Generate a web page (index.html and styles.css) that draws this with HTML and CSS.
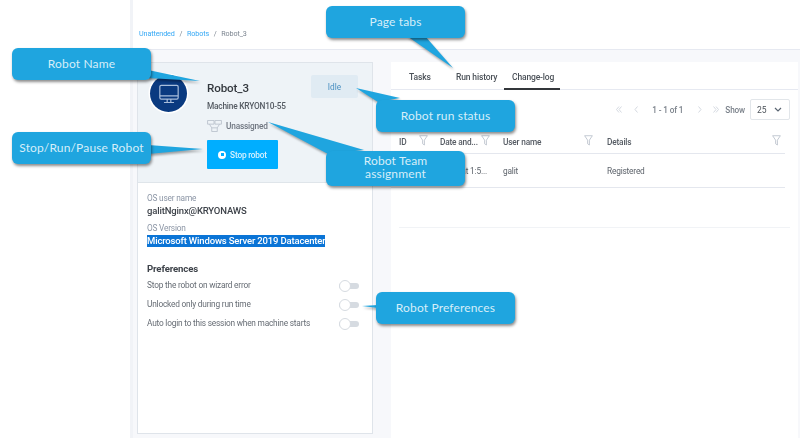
FILE: index.html
```html
<!DOCTYPE html>
<html lang="en">
<head>
<meta charset="utf-8">
<title>Robot_3</title>
<link rel="stylesheet" href="styles.css">
</head>
<body>
<div class="page">
  <div class="gutter"></div>
  <div class="app">
    <header class="crumbs">
      <a>Unattended</a><span class="sep">/</span><a>Robots</a><span class="sep">/</span><span>Robot_3</span>
    </header>
    <main class="main">
      <section class="card">
        <div class="head">
          <div class="avatar">
            <svg width="22" height="22" viewBox="0 0 24 24" fill="none" stroke="#a9bedb" stroke-width="1.3"><rect x="2" y="2.5" width="20" height="15" rx="1.5"/><path d="M2 14h20M10 17.5v3.5M14 17.5v3.5M6.5 21.3h11"/></svg>
          </div>
          <div class="head-body">
            <div class="title-row">
              <div class="name">Robot_3</div>
              <div class="status">Idle</div>
            </div>
            <div class="machine">Machine KRYON10-55</div>
            <div class="team">
              <svg width="15" height="12" viewBox="0 0 16 13" fill="none" stroke="#bcc3ce" stroke-width="1"><path d="M.5.5h7v4h-7zM8.5.5h7v4h-7zM5 8.5h6v4H5zM2.5 4.5 5 8.5M13.5 4.5 11 8.5"/></svg>
              <span>Unassigned</span>
            </div>
            <button class="stop"><span class="stop-ic"><i></i></span>Stop robot</button>
          </div>
        </div>
        <div class="info">
          <div class="lbl">OS user name</div>
          <div class="val">galitNginx@KRYONAWS</div>
          <div class="lbl lbl2">OS Version</div>
          <div class="val"><span class="sel">Microsoft Windows Server 2019 Datacenter</span></div>
          <h3 class="pref-title">Preferences</h3>
          <div class="pref"><span>Stop the robot on wizard error</span><span class="toggle"><i></i></span></div>
          <div class="pref"><span>Unlocked only during run time</span><span class="toggle"><i></i></span></div>
          <div class="pref"><span>Auto login to this session when machine starts</span><span class="toggle"><i></i></span></div>
        </div>
      </section>
      <section class="panel">
        <nav class="tabs">
          <span class="tab">Tasks</span>
          <span class="tab">Run history</span>
          <span class="tab active">Change-log</span>
        </nav>
        <div class="pager">
          <svg class="pg pg-first" width="6" height="7" viewBox="0 0 6 7"><path d="M3 .5 .5 3.5 3 6.5M5.5 .5 3 3.5 5.5 6.5"/></svg>
          <svg class="pg pg-prev" width="4" height="7" viewBox="0 0 4 7"><path d="M3.5 .5 1 3.5 3.5 6.5"/></svg>
          <span class="pg-count">1 - 1 of 1</span>
          <svg class="pg pg-next" width="4" height="7" viewBox="0 0 4 7"><path d="M.5 .5 3 3.5 .5 6.5"/></svg>
          <svg class="pg pg-last" width="6" height="7" viewBox="0 0 6 7"><path d="M.5 .5 3 3.5 .5 6.5M3 .5 5.5 3.5 3 6.5"/></svg>
          <span class="show">Show</span>
          <span class="select">25<svg width="8" height="5" viewBox="0 0 8 5" fill="none" stroke="#5a6572" stroke-width="1.2"><path d="M1 1l3 3 3-3"/></svg></span>
        </div>
        <div class="grid ghead">
          <div class="th">ID<svg class="flt" viewBox="0 0 10 12"><path d="M.7.7h8.6L6 5.6V11L4 9.6v-4z"/></svg></div>
          <div class="th">Date and...<svg class="flt" viewBox="0 0 10 12"><path d="M.7.7h8.6L6 5.6V11L4 9.6v-4z"/></svg></div>
          <div class="th">User name<svg class="flt" viewBox="0 0 10 12"><path d="M.7.7h8.6L6 5.6V11L4 9.6v-4z"/></svg></div>
          <div class="th">Details<svg class="flt" viewBox="0 0 10 12"><path d="M.7.7h8.6L6 5.6V11L4 9.6v-4z"/></svg></div>
        </div>
        <div class="grid grow">
          <div></div>
          <div class="date">Jan 9 at 1:5...</div>
          <div>galit</div>
          <div>Registered</div>
        </div>
        <div class="faint"></div>
      </section>
    </main>
  </div>
</div>

<svg class="tails" width="800" height="438" viewBox="0 0 800 438">
  <g class="tail-shadow">
    <path d="M148 70 200 81 148 78z"/>
    <path d="M148 145 203 149 148 154z"/>
    <path d="M407 36 453 68 425 36z"/>
    <path d="M356 88 400 98 378 102z"/>
    <path d="M268 122 364 150 328 154z"/>
    <path d="M362 306 378 305 378 308z"/>
  </g>
</svg>
<div class="callout c-name">Robot Name</div>
<div class="callout c-stop">Stop/Run/Pause Robot</div>
<div class="callout c-tabs">Page tabs</div>
<div class="callout c-run">Robot run status</div>
<div class="callout c-team">Robot Team<br>assignment</div>
<div class="callout c-pref">Robot Preferences</div>
</body>
</html>
```
FILE: styles.css
```css
* { box-sizing: border-box; }
html, body { margin: 0; padding: 0; }
body {
  width: 800px;
  height: 438px;
  overflow: hidden;
  position: relative;
  background: #fff;
  font-family: Roboto, "Liberation Sans", sans-serif;
  color: #4a5058;
}
.page { display: flex; height: 438px; filter: blur(0.45px); }
.gutter { width: 130px; flex: none; background: #fff; }
.app {
  flex: 1;
  display: flex;
  flex-direction: column;
  border-left: 3px solid #f1f3f7;
  min-width: 0;
}
.crumbs {
  height: 50px;
  flex: none;
  background: #fff;
  border-bottom: 1px solid #e6e9f1;
  padding: 30px 0 0 6px;
  font-size: 7.2px;
  letter-spacing: -.12px;
  line-height: 1;
  color: #7c8590;
}
.crumbs a { color: #35a8f5; }
.sep { margin: 0 4.7px; color: #7c8590; }
.main {
  flex: 1;
  display: flex;
  background: #f7f8fb;
  padding: 12px 2px 0 4px;
  gap: 18px;
  min-height: 0;
}
.card {
  width: 236px;
  height: 372px;
  flex: none;
  background: #fff;
  border: 1px solid #dfe4ea;
  display: flex;
  flex-direction: column;
}
.head {
  height: 120px;
  flex: none;
  background: #eef3f7;
  border-bottom: 1px solid #dfe5ea;
  display: flex;
  padding: 11px 14px 0 12px;
  gap: 19px;
}
.avatar {
  width: 37px;
  height: 37px;
  margin-top: 1px;
  flex: none;
  border-radius: 50%;
  background: #0a3a80;
  box-shadow: 0 0 0 1.5px #fff;
  display: flex;
  align-items: center;
  justify-content: center;
}
.head-body { flex: 1; min-width: 0; margin-left: 1px; }
.title-row { display: flex; justify-content: space-between; height: 24px; }
.name { font-size: 11.6px; letter-spacing: -.1px; font-weight: 500; color: #33383e; line-height: 28px; }
.status {
  width: 47px;
  height: 23px;
  margin-top: 1px;
  background: #e0ebf3;
  border-radius: 2px;
  color: #4a90c2;
  font-size: 8.3px;
  line-height: 24px;
  text-align: center;
}
.machine { font-size: 8.3px; letter-spacing: -.2px; font-weight: 500; color: #555b63; line-height: 12px; margin-top: 2px; }
.team {
  display: flex;
  align-items: center;
  gap: 4px;
  margin-top: 7px;
  height: 13px;
  font-size: 8.3px;
  letter-spacing: -.2px;
  font-weight: 500;
  color: #6f7680;
}
.stop {
  display: flex;
  align-items: center;
  justify-content: center;
  gap: 4px;
  margin-top: 8px;
  width: 71px;
  height: 29px;
  padding: 0;
  border: 0;
  border-radius: 1px;
  background: #00aeff;
  color: #d4f0ff;
  font: 500 8.3px Roboto, sans-serif;
  letter-spacing: -.2px;
}
.stop-ic {
  width: 8px;
  height: 8px;
  border-radius: 50%;
  background: #fff;
  display: flex;
  align-items: center;
  justify-content: center;
}
.stop-ic i { width: 3px; height: 3px; background: #00aeff; display: block; }
.info { padding: 10px 13px 0 9px; }
.lbl { font-size: 8.3px; letter-spacing: -.2px; color: #8b95a5; line-height: 11px; }
.lbl2 { margin-top: 6px; }
.val { font-size: 9.5px; letter-spacing: -.16px; font-weight: 500; color: #3e434a; line-height: 12px; margin-top: 1px; }
.sel { background: #0a74d6; color: #fff; display: inline-block; }
.pref-title { margin: 15px 0 0; font-size: 9.6px; letter-spacing: -.12px; font-weight: 700; line-height: 13px; color: #3e434a; }
.pref {
  display: flex;
  justify-content: space-between;
  align-items: center;
  height: 19px;
  font-size: 8.3px;
  letter-spacing: -.2px;
  color: #666c74;
}
.toggle {
  position: relative;
  width: 20px;
  height: 6px;
  background: #d6dbe1;
  border-radius: 3px;
  margin-top: 3px;
  flex: none;
}
.toggle i {
  position: absolute;
  left: 0;
  top: -3px;
  width: 12px;
  height: 12px;
  border-radius: 50%;
  background: #fff;
  border: 1px solid #d6dbe1;
}
.panel { flex: 1; background: #fff; min-width: 0; }
.tabs {
  display: flex;
  height: 28px;
  border-bottom: 1px solid #e6e9f1;
  padding-left: 18px;
}
.tab {
  padding: 9px 0 0;
  font-size: 8.5px;
  letter-spacing: -.15px;
  line-height: 12px;
  color: #4c5259;
  font-weight: 500;
  white-space: nowrap;
}
.tab:nth-child(1) { width: 47px; }
.tab:nth-child(2) { width: 48px; }
.tab.active {
  padding: 9px 8px 0;
  width: 56px;
  border-bottom: 2px solid #33363a;
  height: 28px;
}
.pager {
  display: flex;
  align-items: center;
  justify-content: flex-end;
  height: 21px;
  margin-top: 9px;
  padding-right: 8px;
  font-size: 8.2px;
  letter-spacing: -.14px;
  font-weight: 500;
  color: #7a818a;
}
.pg { fill: none; stroke: #d4d9e0; stroke-width: 1; flex: none; }
.pg-prev { margin-left: 12px; }
.pg-count { margin: 0 15px 0 14px; }
.pg-last { margin-left: 11px; }
.show { margin: 0 5px 0 6px; }
.select {
  width: 40px;
  height: 21px;
  border: 1px solid #e2e6ea;
  border-radius: 2px;
  display: flex;
  align-items: center;
  justify-content: space-between;
  padding: 0 7px 0 6px;
  color: #4c5259;
  font-size: 8.5px;
  font-weight: 400;
}
.grid {
  display: grid;
  grid-template-columns: 41px 63px 104px 1fr;
  margin-right: 13px;
  padding-left: 8px;
  font-size: 8.3px;
  letter-spacing: -.18px;
  border-bottom: 1px solid #e4e7ee;
}
.ghead { height: 24px; margin-top: 10px; align-items: center; font-weight: 500; color: #555b63; }
.th { position: relative; white-space: nowrap; height: 100%; line-height: 24px; }
.flt {
  position: absolute;
  top: 5px;
  width: 9px;
  height: 11px;
  fill: none;
  stroke: #b6bdc8;
  stroke-width: .9;
}
.th:nth-child(1) .flt { right: 12px; }
.th:nth-child(2) .flt { right: 13px; }
.th:nth-child(3) .flt { right: 14px; }
.th:nth-child(4) .flt { right: 4px; }
.grow { height: 34px; align-items: center; color: #5c626a; }
.date { white-space: nowrap; }
.faint { height: 1px; background: #f1f3f6; margin: 39px 8px 0 8px; }

.tails { position: absolute; left: 0; top: 0; pointer-events: none; }
.tail-shadow { fill: #1fa5df; filter: drop-shadow(1px 2px 1px rgba(0,0,0,.35)); }
.callout {
  position: absolute;
  width: 139px;
  height: 32px;
  background: #1fa5df;
  border-radius: 6px;
  box-shadow: 1px 2px 3px rgba(0,0,0,.45);
  color: #d6eef9;
  font-family: Lato, "Open Sans", sans-serif;
  font-size: 12px;
  line-height: 32px;
  text-align: center;
  letter-spacing: .15px;
}
.c-name { left: 12px; top: 48px; }
.c-stop { left: 12px; top: 132px; }
.c-tabs { left: 326px; top: 6px; }
.c-run { left: 376px; top: 100px; }
.c-team { left: 326px; top: 151px; height: 35px; line-height: 13px; padding-top: 3px; }
.c-pref { left: 376px; top: 292px; }
```
